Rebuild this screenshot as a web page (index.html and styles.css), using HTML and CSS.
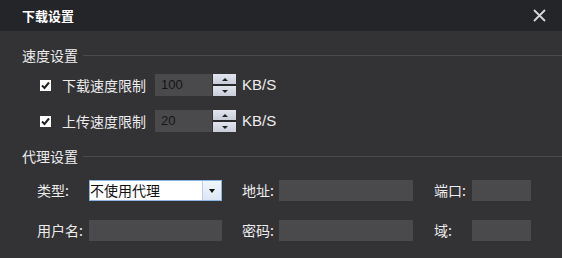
FILE: index.html
```html
<!DOCTYPE html>
<html lang="zh">
<head>
<meta charset="utf-8">
<title>下载设置</title>
<link rel="stylesheet" href="styles.css">
</head>
<body>
<div class="dialog">
  <div class="titlebar">
    <span class="title">下载设置</span>
    <svg class="close" width="13" height="13" viewBox="0 0 13 13"><path d="M1 1 L12 12 M12 1 L1 12" stroke="#d6d6d6" stroke-width="1.8" fill="none"/></svg>
  </div>
  <div class="body">
    <div class="section-head"><span>速度设置</span><i class="rule"></i></div>
    <div class="speed-row">
      <span class="check"><svg width="11" height="11" viewBox="0 0 11 11"><path d="M2 5.5 L4.5 8 L9 2.5" stroke="#222" stroke-width="2" fill="none"/></svg></span>
      <span class="speed-label">下载速度限制</span>
      <span class="num">100</span>
      <span class="spin"><span class="up"><i></i></span><span class="down"><i></i></span></span>
      <span class="unit">KB/S</span>
    </div>
    <div class="speed-row second">
      <span class="check"><svg width="11" height="11" viewBox="0 0 11 11"><path d="M2 5.5 L4.5 8 L9 2.5" stroke="#222" stroke-width="2" fill="none"/></svg></span>
      <span class="speed-label">上传速度限制</span>
      <span class="num">20</span>
      <span class="spin"><span class="up"><i></i></span><span class="down"><i></i></span></span>
      <span class="unit">KB/S</span>
    </div>
    <div class="section-head proxy-head"><span>代理设置</span><i class="rule"></i></div>
    <div class="proxy-grid">
      <span class="lbl">类型:</span>
      <span class="select"><span class="select-text">不使用代理</span><span class="select-btn"><i></i></span></span>
      <span class="lbl mid">地址:</span>
      <span class="field"></span>
      <span class="lbl mid2">端口:</span>
      <span class="field"></span>
      <span class="lbl">用户名:</span>
      <span class="field"></span>
      <span class="lbl mid">密码:</span>
      <span class="field"></span>
      <span class="lbl mid2">域:</span>
      <span class="field"></span>
    </div>
  </div>
</div>
</body>
</html>
```
FILE: styles.css
```css
html, body {
  margin: 0;
  padding: 0;
  background: #333336;
}
.dialog {
  width: 562px;
  height: 258px;
  background: #333336;
  font-family: "Noto Sans CJK SC", "Liberation Sans", sans-serif;
  color: #ececec;
  font-size: 14px;
  overflow: hidden;
}
.titlebar {
  height: 31px;
  background: #242529;
  display: flex;
  align-items: center;
  justify-content: space-between;
  padding: 0 16px 0 22px;
}
.title {
  font-size: 13px;
  font-weight: bold;
  color: #ffffff;
  line-height: 20px;
}
.close { display: block; }
.body {
  padding-top: 14px;
}
.section-head {
  height: 20px;
  display: flex;
  align-items: center;
  padding-left: 22px;
  line-height: 20px;
}
.section-head .rule {
  flex: 1;
  height: 1px;
  background: #4a4a4d;
  margin-left: 5px;
}
.speed-row {
  height: 22px;
  margin-top: 9px;
  display: flex;
  align-items: center;
  padding-left: 40px;
}
.speed-row.second { margin-top: 14px; }
.check {
  width: 11px;
  height: 11px;
  background: #ffffff;
  display: block;
}
.check svg { display: block; }
.speed-label {
  margin-left: 11px;
  width: 83px;
  line-height: 20px;
  white-space: nowrap;
}
.num {
  margin-left: 10px;
  width: 57px;
  height: 22px;
  background: #4a4a4c;
  color: #151515;
  font-family: "Liberation Sans", sans-serif;
  font-size: 13px;
  line-height: 22px;
  padding-left: 6px;
  box-sizing: border-box;
}
.spin {
  margin-left: 1px;
  width: 23px;
  height: 22px;
  display: flex;
  flex-direction: column;
  background: #2a2a2d;
  gap: 2px;
}
.spin .up, .spin .down {
  flex: 1;
  background: linear-gradient(#e2e5ee, #c9cdd9);
  display: flex;
  align-items: center;
  justify-content: center;
}
.spin .up i {
  border-left: 3px solid transparent;
  border-right: 3px solid transparent;
  border-bottom: 3px solid #222;
}
.spin .down i {
  border-left: 3px solid transparent;
  border-right: 3px solid transparent;
  border-top: 3px solid #222;
}
.unit {
  margin-left: 6px;
  font-family: "Liberation Sans", sans-serif;
  font-size: 15px;
  line-height: 20px;
}
.proxy-head { margin-top: 14px; }
.proxy-grid {
  margin-top: 14px;
  padding-left: 37px;
  display: grid;
  grid-template-columns: 52px 133px 57px 134px 59px 59px;
  grid-auto-rows: 21px;
  row-gap: 19px;
  align-items: center;
}
.lbl {
  line-height: 21px;
  white-space: nowrap;
}
.lbl.mid { padding-left: 20px; }
.lbl.mid2 { padding-left: 21px; }
.field {
  height: 21px;
  background: #4a4a4c;
}
.select {
  height: 21px;
  box-sizing: border-box;
  border: 1px solid #8db5e2;
  background: #ffffff;
  display: flex;
  align-items: stretch;
}
.select-text {
  flex: 1;
  color: #111;
  font-size: 14px;
  line-height: 19px;
  padding-left: 0;
}
.select-btn {
  width: 18px;
  border-left: 1px solid #b9cde6;
  background: linear-gradient(#f2f6fc, #dde7f4);
  display: flex;
  align-items: center;
  justify-content: center;
}
.select-btn i {
  border-left: 3px solid transparent;
  border-right: 3px solid transparent;
  border-top: 4px solid #111;
}
```
